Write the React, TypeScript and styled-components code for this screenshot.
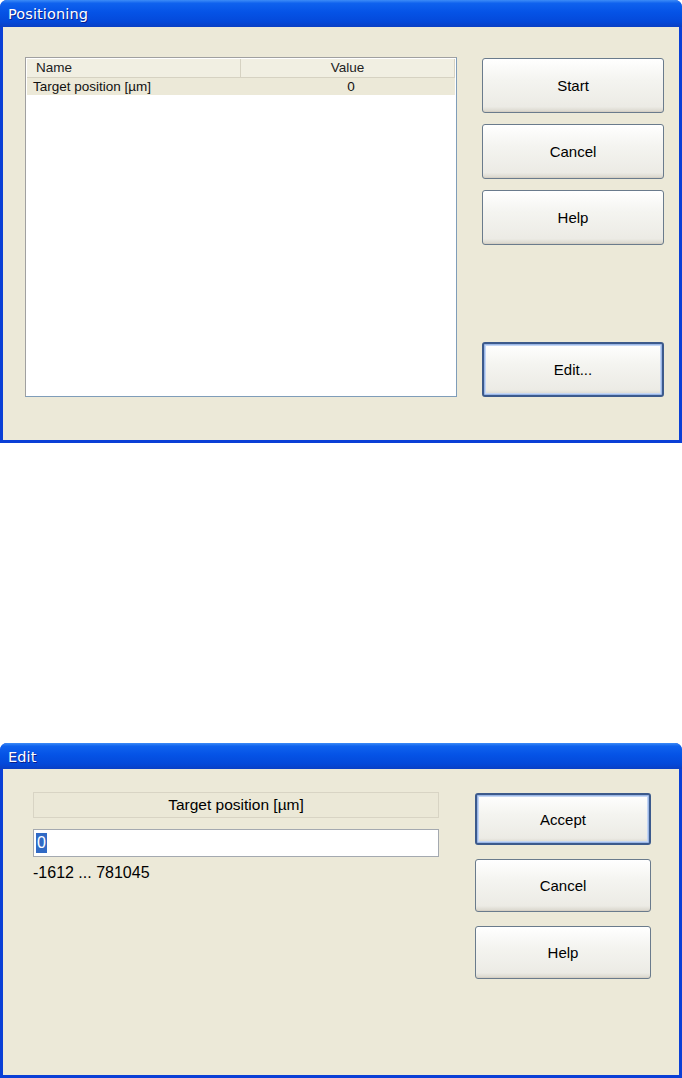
import React from 'react'
import styled, { createGlobalStyle } from 'styled-components'

const GlobalStyle = createGlobalStyle`
  html, body {
    margin: 0;
    padding: 0;
    background: #ffffff;
  }
  body {
    font-family: "Liberation Sans", Arial, sans-serif;
    color: #000;
  }
`

const App: React.FC = () => {
  return (
    <Page>
      <GlobalStyle />
      <Window $height={443}>
        <TitleBar $height={27}>
          <Title>Positioning</Title>
        </TitleBar>
        <Body $pad="30px 15px 0 22px" $gap={25}>
          <ListBox>
            <ListHeader>
              <HeaderCell $width={214}>Name</HeaderCell>
              <HeaderCell $center>Value</HeaderCell>
            </ListHeader>
            <ListRow>
              <Cell $width={214}>Target position [µm]</Cell>
              <Cell $center>0</Cell>
            </ListRow>
          </ListBox>
          <ButtonColumn $width={182} $gap={11} $height={340}>
            <Button $height={55}>Start</Button>
            <Button $height={55}>Cancel</Button>
            <Button $height={55}>Help</Button>
            <Spacer />
            <Button $height={55} $default>
              Edit...
            </Button>
          </ButtonColumn>
        </Body>
      </Window>

      <Gap />

      <Window $height={335}>
        <TitleBar $height={26}>
          <Title>Edit</Title>
        </TitleBar>
        <Body $pad="23px 28px 0 30px" $gap={36}>
          <Form>
            <FieldLabel>Target position [µm]</FieldLabel>
            <Field>
              <Selected>0</Selected>
            </Field>
            <Range>-1612 ... 781045</Range>
          </Form>
          <ButtonColumn $width={176} $gap={14}>
            <Button $height={52} $default>
              Accept
            </Button>
            <Button $height={53}>Cancel</Button>
            <Button $height={53}>Help</Button>
          </ButtonColumn>
        </Body>
      </Window>
    </Page>
  )
}

export default App

const Page = styled.div`
  width: 682px;
  display: flex;
  flex-direction: column;
`

const Gap = styled.div`
  height: 300px;
`

const Window = styled.div<{ $height: number }>`
  height: ${(p) => p.$height}px;
  display: flex;
  flex-direction: column;
  border-radius: 7px 7px 0 0;
  overflow: hidden;
  background: #0a3fd6;
`

const TitleBar = styled.div<{ $height: number }>`
  height: ${(p) => p.$height}px;
  flex-shrink: 0;
  display: flex;
  align-items: center;
  padding: 1px 0 0 8px;
  box-sizing: border-box;
  background: linear-gradient(
    to bottom,
    #3d8cf7 0%,
    #0f62ee 12%,
    #0553e6 45%,
    #0449da 80%,
    #0a3fc4 100%
  );
`

const Title = styled.span`
  font-family: "DejaVu Sans", "Liberation Sans", sans-serif;
  font-size: 14.5px;
  color: #ffffff;
  text-shadow: 1px 1px 0 #0a1e8c;
  letter-spacing: 0.1px;
`

const Body = styled.div<{ $pad: string; $gap: number }>`
  flex: 1;
  display: flex;
  align-items: flex-start;
  gap: ${(p) => p.$gap}px;
  margin: 0 3px 3px 3px;
  padding: ${(p) => p.$pad};
  background: #ece9d8;
`

const ListBox = styled.div`
  width: 432px;
  height: 340px;
  box-sizing: border-box;
  border: 1px solid #7f9db9;
  border-top-color: #a0a0a0;
  border-left-color: #a0a0a0;
  background: #ffffff;
  display: flex;
  flex-direction: column;
  padding: 1px;
`

const ListHeader = styled.div`
  height: 18px;
  display: flex;
  background: #f1efe2;
  border-bottom: 1px solid #d6d2c2;
`

const HeaderCell = styled.div<{ $width?: number; $center?: boolean }>`
  ${(p) => (p.$width ? `width: ${p.$width}px;` : 'flex: 1;')}
  box-sizing: border-box;
  font-size: 13.5px;
  line-height: 18px;
  padding-left: ${(p) => (p.$center ? 0 : 9)}px;
  text-align: ${(p) => (p.$center ? 'center' : 'left')};
  border-right: 1px solid #d6d2c2;
  color: #222;
`

const ListRow = styled.div`
  height: 17px;
  display: flex;
  background: #ece9d8;
`

const Cell = styled.div<{ $width?: number; $center?: boolean }>`
  ${(p) => (p.$width ? `width: ${p.$width}px;` : 'flex: 1;')}
  font-size: 13.5px;
  line-height: 17px;
  padding-left: ${(p) => (p.$center ? 0 : 6)}px;
  text-align: ${(p) => (p.$center ? 'center' : 'left')};
  color: #111;
`

const ButtonColumn = styled.div<{ $width: number; $gap: number; $height?: number }>`
  width: ${(p) => p.$width}px;
  ${(p) => (p.$height ? `height: ${p.$height}px;` : '')}
  display: flex;
  flex-direction: column;
  gap: ${(p) => p.$gap}px;
  padding-top: 1px;
  box-sizing: border-box;
`

const Spacer = styled.div`
  flex: 1;
`

const Button = styled.button<{ $height: number; $default?: boolean }>`
  height: ${(p) => p.$height}px;
  flex-shrink: 0;
  font-family: "Liberation Sans", Arial, sans-serif;
  font-size: 15px;
  color: #000;
  border: 1px solid #6a7b8c;
  border-radius: 3px;
  background: linear-gradient(to bottom, #ffffff 0%, #f4f4f0 40%, #ecebe5 90%, #d8d5cb 100%);
  box-shadow: ${(p) =>
    p.$default
      ? 'inset 0 0 0 1px #9ab6e6, inset 0 0 0 2px #c4d6f4'
      : 'inset 0 -1px 0 #d6d0c5'};
  ${(p) => (p.$default ? 'border-color: #3c5a8c; border-width: 2px;' : '')}
  padding: 0;
`

const Form = styled.div`
  width: 406px;
  display: flex;
  flex-direction: column;
`

const FieldLabel = styled.div`
  height: 26px;
  box-sizing: border-box;
  border: 1px solid #d8d4c4;
  background: #ebe8d7;
  font-size: 15.5px;
  line-height: 24px;
  text-align: center;
  color: #000;
`

const Field = styled.div`
  margin-top: 11px;
  height: 28px;
  box-sizing: border-box;
  border: 1px solid #a4a9b0;
  background: #ffffff;
  display: flex;
  align-items: center;
  padding-left: 2px;
`

const Selected = styled.span`
  background: #316ac5;
  color: #ffffff;
  font-size: 16px;
  line-height: 20px;
  padding: 0 1px;
`

const Range = styled.div`
  margin-top: 7px;
  font-size: 16px;
  color: #000;
`
